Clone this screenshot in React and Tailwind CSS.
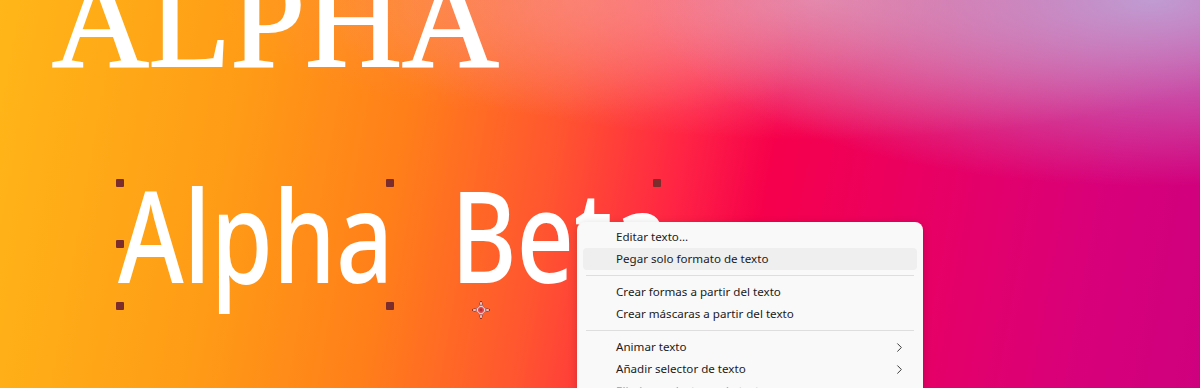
import React from "react";
import { ChevronRight } from "lucide-react";

const handles = [
  [120, 183],
  [390, 183],
  [657, 183],
  [120, 244],
  [657, 244],
  [120, 306],
  [390, 306],
  [657, 306],
];

function Item({ label, highlight, sub, disabled }) {
  return (
    <div
      className={
        "mx-[6px] h-[22px] flex items-center rounded-[4px] pl-[33px] pr-[10px] " +
        (highlight ? "bg-[#efefef]" : "")
      }
    >
      <span
        className={
          "flex-1 text-[11.6px] leading-none " +
          (disabled ? "text-[#a0a0a0]" : "text-[#1b1b1b]")
        }
      >
        {label}
      </span>
      {sub && <ChevronRight size={15} strokeWidth={1.6} className="text-[#3a3a3a]" />}
    </div>
  );
}

function Sep() {
  return (
    <div className="h-[11px] flex items-center px-[9px]">
      <div className="h-px w-full bg-[#dedede]" />
    </div>
  );
}

export default function App() {
  return (
    <div className="relative w-[1200px] h-[388px] overflow-hidden bg-[image:radial-gradient(ellipse_42%_48%_at_96%_0%,rgba(190,162,214,0.95),rgba(190,162,214,0)),radial-gradient(ellipse_42%_36%_at_68%_0%,rgba(245,150,170,0.8),rgba(245,150,170,0)),radial-gradient(ellipse_30%_30%_at_48%_0%,rgba(255,150,110,0.45),rgba(255,150,110,0)),linear-gradient(100deg,#ffb618_0%,#ff9c16_20%,#ff7e1a_34%,#ff5530_46%,#ff2444_56%,#f6004c_63%,#e80064_76%,#d8007a_90%,#cf007e_100%)]">
      {/* ALPHA serif */}
      <div
        className="absolute left-[52px] top-[-46px] text-[134px] leading-none text-white whitespace-nowrap [-webkit-text-stroke:2px_white]"
        style={{ fontFamily: '"Liberation Serif", "Times New Roman", serif' }}
      >
        ALPHA
      </div>

      {/* Alpha Beta */}
      <div
        className="absolute left-[118px] top-[170px] text-[127px] font-medium leading-none text-white whitespace-nowrap origin-left scale-x-[0.79] [word-spacing:40px]"
        style={{ fontFamily: '"Noto Sans", "Open Sans", sans-serif' }}
      >
        Alpha Beta
      </div>

      {/* selection handles */}
      {handles.map(([x, y], i) => (
        <div
          key={i}
          className="absolute w-[8px] h-[8px] rounded-[1px] bg-[#7b2d2d] -translate-x-1/2 -translate-y-1/2"
          style={{ left: x, top: y }}
        />
      ))}

      {/* anchor point */}
      <svg className="absolute left-[472px] top-[301px]" width="18" height="18" viewBox="0 0 18 18">
        <path
          d="M9 1 L10.8 7.2 L17 9 L10.8 10.8 L9 17 L7.2 10.8 L1 9 L7.2 7.2 Z"
          fill="none"
          stroke="#7a2a2a"
          strokeWidth="2"
          strokeLinejoin="round"
        />
        <path
          d="M9 1 L10.8 7.2 L17 9 L10.8 10.8 L9 17 L7.2 10.8 L1 9 L7.2 7.2 Z"
          fill="none"
          stroke="#f7d8d8"
          strokeWidth="0.9"
          strokeLinejoin="round"
        />
        <circle cx="9" cy="9" r="3.6" fill="#e2474a" stroke="#f7d8d8" strokeWidth="1" />
        <circle cx="9" cy="9" r="1.4" fill="#b0303a" />
      </svg>

      {/* context menu */}
      <div
        className="absolute left-[577px] top-[222px] w-[346px] h-[200px] rounded-[8px] bg-[#f9f9f9] pt-[4px] shadow-[0_2px_10px_rgba(0,0,0,0.18)]"
        style={{ fontFamily: '"Noto Sans", "Open Sans", sans-serif' }}
      >
        <Item label="Editar texto..." />
        <Item label="Pegar solo formato de texto" highlight />
        <Sep />
        <Item label="Crear formas a partir del texto" />
        <Item label="Crear máscaras a partir del texto" />
        <Sep />
        <Item label="Animar texto" sub />
        <Item label="Añadir selector de texto" sub />
        <Item label="Eliminar selectores de texto" disabled />
      </div>
    </div>
  );
}
